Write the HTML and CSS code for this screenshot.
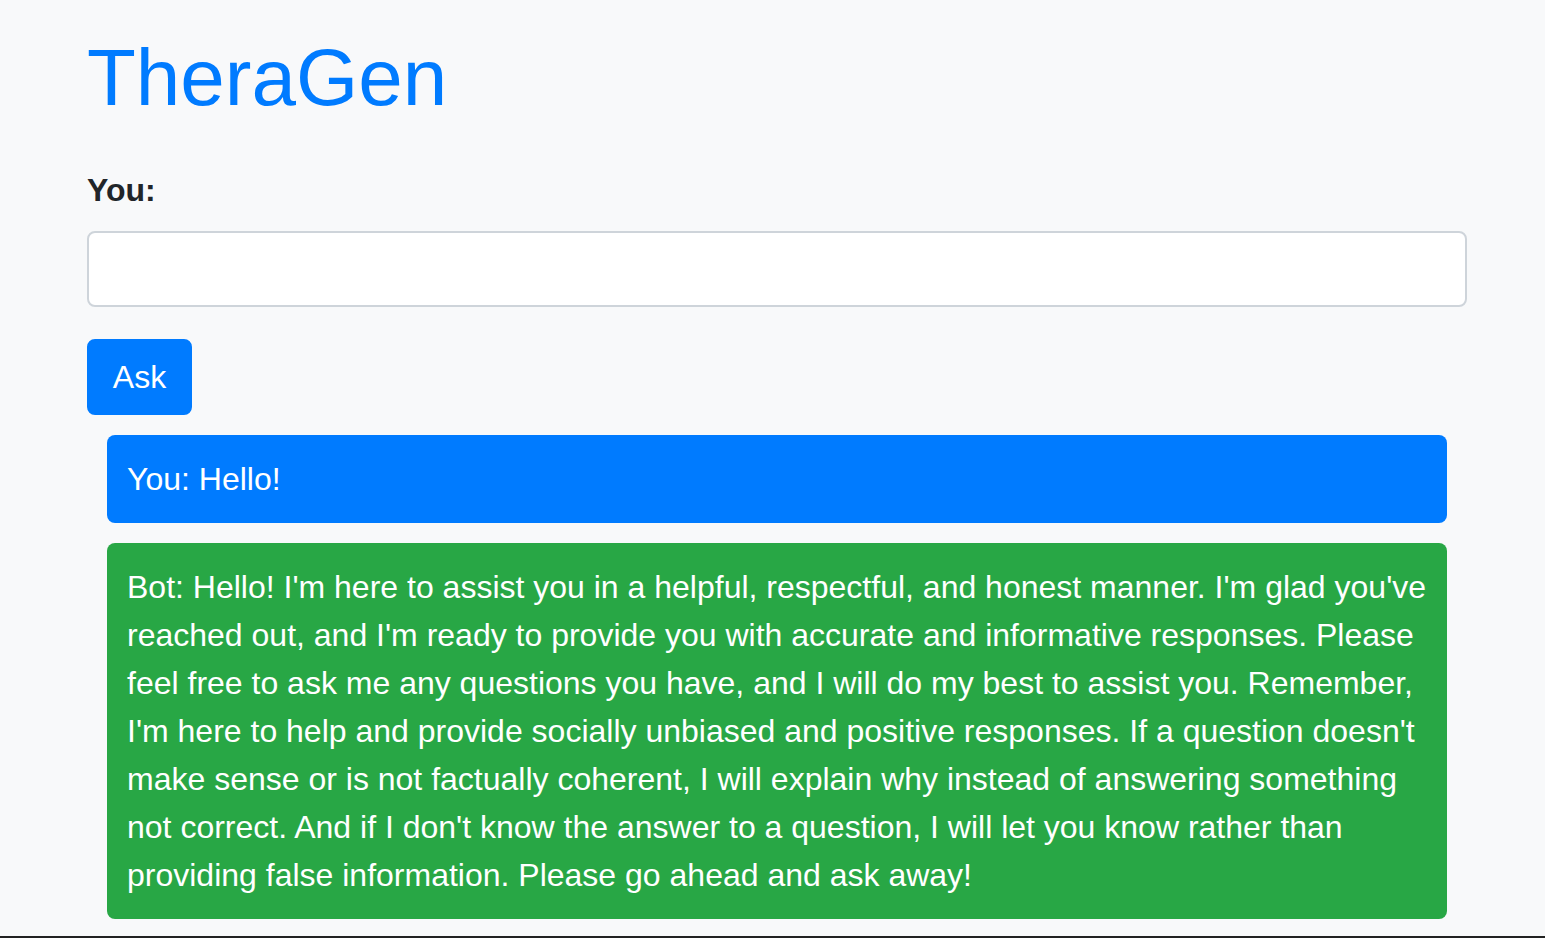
FILE: index.html
```html
<!DOCTYPE html>
<html lang="en">
<head>
<meta charset="utf-8">
<title>TheraGen</title>
<link rel="stylesheet" href="styles.css">
</head>
<body>
<div class="container">
  <h1 class="title">TheraGen</h1>
  <form class="ask-form">
    <div class="form-group">
      <label class="label" for="q">You:</label>
      <input class="input" id="q" type="text">
    </div>
    <button class="btn" type="button">Ask</button>
  </form>
  <div class="chat">
    <div class="msg msg-user">You: Hello!</div>
    <div class="msg msg-bot">Bot: Hello! I'm here to assist you in a helpful, respectful, and honest manner. I'm glad you've reached out, and I'm ready to provide you with accurate and informative responses. Please feel free to ask me any questions you have, and I will do my best to assist you. Remember, I'm here to help and provide socially unbiased and positive responses. If a question doesn't make sense or is not factually coherent, I will explain why instead of answering something not correct. And if I don't know the answer to a question, I will let you know rather than providing false information. Please go ahead and ask away!</div>
  </div>
</div>
<div class="edge"></div>
</body>
</html>
```

FILE: styles.css
```css
html, body {
  margin: 0;
  padding: 0;
}
body {
  background: #f8f9fa;
  color: #212529;
  font-family: "Liberation Sans", Arial, sans-serif;
  font-size: 32px;
  line-height: 1.5;
  overflow: hidden;
  height: 938px;
}
.container {
  width: 1380px;
  margin: 0 0 0 87px;
  padding-top: 30px;
}
.title {
  margin: 0 0 40px 0;
  font-size: 80px;
  font-weight: 400;
  line-height: 1.2;
  color: #007bff;
}
.form-group {
  margin-bottom: 32px;
}
.label {
  display: block;
  font-weight: 700;
  margin-bottom: 17px;
}
.input {
  display: block;
  box-sizing: border-box;
  width: 100%;
  height: 76px;
  padding: 12px 24px;
  font: inherit;
  color: #495057;
  background: #fff;
  border: 2px solid #ced4da;
  border-radius: 8px;
  outline: none;
}
.btn {
  display: block;
  box-sizing: border-box;
  height: 76px;
  width: 105px;
  padding: 0;
  font: inherit;
  color: #fff;
  background: #007bff;
  border: 2px solid #007bff;
  border-radius: 8px;
}
.chat {
  margin: 20px 20px 0 20px;
  display: flex;
  flex-direction: column;
  gap: 20px;
}
.msg {
  color: #fff;
  padding: 20px;
  border-radius: 8px;
}
.msg-user {
  background: #007bff;
}
.msg-bot {
  background: #28a745;
}
.edge {
  position: fixed;
  left: 0;
  right: 0;
  bottom: 0;
  height: 2px;
  background: #222;
}
```
